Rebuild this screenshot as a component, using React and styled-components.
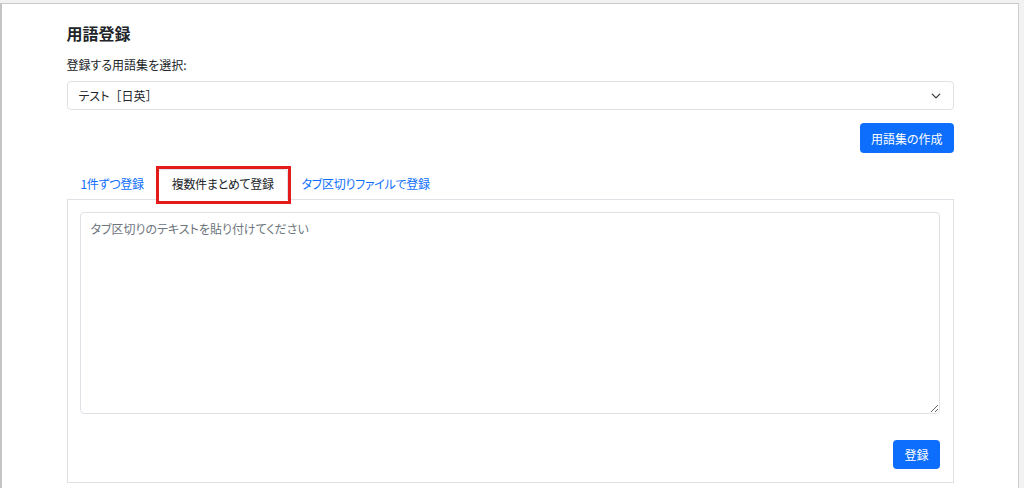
import React, { useState } from "react";
import styled, { createGlobalStyle } from "styled-components";

const GlobalStyle = createGlobalStyle`
  html, body {
    margin: 0;
    padding: 0;
    height: 100%;
    background: #f2f2f2;
  }
  body {
    font-family: "Noto Sans CJK JP", "Noto Sans", sans-serif;
    font-feature-settings: "palt";
    color: #212529;
    overflow: hidden;
  }
  #root {
    height: 100%;
  }
`;

const Frame = styled.div`
  box-sizing: border-box;
  height: calc(100% - 3px);
  margin: 3px 5px 0 0;
  background: #fff;
  border-top: 1px solid #c9c9c9;
  border-left: 2px solid #c4c4c4;
  border-right: 1px solid #cfcfcf;
`;

const Container = styled.div`
  width: 887px;
  margin: 0 auto;
  padding-top: 19px;
`;

const Title = styled.h2`
  margin: 0;
  font-size: 16px;
  line-height: 20px;
  font-weight: 700;
`;

const Label = styled.label`
  display: block;
  margin-top: 14px;
  font-size: 12px;
  line-height: 16px;
`;

const SelectBox = styled.div`
  box-sizing: border-box;
  margin-top: 8px;
  height: 29px;
  border: 1px solid #dee2e6;
  border-radius: 4px;
  display: flex;
  align-items: center;
  justify-content: space-between;
  padding: 0 12px 0 11px;
  font-size: 12px;
`;

const Bracket = styled.span`
  font-feature-settings: normal;
`;

const ActionRow = styled.div`
  display: flex;
  justify-content: flex-end;
  margin-top: ${(p) => p.$top || 0}px;
`;

const Button = styled.button`
  box-sizing: border-box;
  height: ${(p) => p.$h || 30}px;
  padding: 0 11px;
  border: 0;
  border-radius: 4px;
  background: #0d6efd;
  color: #fff;
  font-family: inherit;
  font-feature-settings: "palt";
  font-size: 12px;
  cursor: pointer;
`;

const Nav = styled.ul`
  list-style: none;
  margin: 16px 0 0;
  padding: 0;
  display: flex;
  border-bottom: 1px solid #dee2e6;
`;

const Tab = styled.li`
  position: relative;
  box-sizing: border-box;
  height: 31px;
  margin-bottom: -1px;
  padding: 0 13px 3px;
  display: flex;
  align-items: center;
  font-size: 12px;
  letter-spacing: -0.3px;
  cursor: pointer;
  color: ${(p) => (p.$active ? "#212529" : "#0d6efd")};
  background: ${(p) => (p.$active ? "#fff" : "transparent")};
  border: 1px solid ${(p) => (p.$active ? "#dee2e6" : "transparent")};
  border-bottom-color: ${(p) => (p.$active ? "#fff" : "transparent")};
  border-radius: 4px 4px 0 0;
`;

const Highlight = styled.span`
  position: absolute;
  top: -4px;
  left: -3px;
  right: -4px;
  bottom: -5px;
  border: 3px solid #e31b1b;
  pointer-events: none;
`;

const Panel = styled.div`
  border: 1px solid #dee2e6;
  border-top: 0;
  padding: 12px 13px 13px 12px;
`;

const TextArea = styled.textarea`
  box-sizing: border-box;
  display: block;
  width: 100%;
  height: 202px;
  border: 1px solid #dee2e6;
  border-radius: 4px;
  padding: 7px 10px;
  font-family: inherit;
  font-feature-settings: "palt";
  font-size: 12px;
  color: #212529;
  resize: vertical;
  &::placeholder {
    color: #6c757d;
  }
`;

const Chevron = () => (
  <svg width="10" height="10" viewBox="0 0 16 16" fill="none">
    <path
      d="M2 5l6 6 6-6"
      stroke="#343a40"
      strokeWidth="2"
      strokeLinecap="round"
      strokeLinejoin="round"
    />
  </svg>
);

const tabs = ["1件ずつ登録", "複数件まとめて登録", "タブ区切りファイルで登録"];

export default function App() {
  const [active, setActive] = useState(1);
  return (
    <>
      <GlobalStyle />
      <Frame>
        <Container>
          <Title>用語登録</Title>
          <Label>登録する用語集を選択:</Label>
          <SelectBox>
            <span>
              テスト<Bracket>［</Bracket>日英<Bracket>］</Bracket>
            </span>
            <Chevron />
          </SelectBox>
          <ActionRow $top={13}>
            <Button>用語集の作成</Button>
          </ActionRow>
          <Nav>
            {tabs.map((t, i) => (
              <Tab key={t} $active={i === active} onClick={() => setActive(i)}>
                {t}
                {i === active && <Highlight />}
              </Tab>
            ))}
          </Nav>
          <Panel>
            <TextArea placeholder="タブ区切りのテキストを貼り付けてください" />
            <ActionRow $top={26}>
              <Button $h={29}>登録</Button>
            </ActionRow>
          </Panel>
        </Container>
      </Frame>
    </>
  );
}
